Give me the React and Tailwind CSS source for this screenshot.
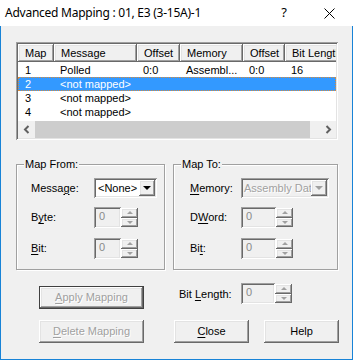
import React from "react";

const RAISED =
  "shadow-[inset_-1px_-1px_0_#696969,inset_1px_1px_0_#ffffff,inset_-2px_-2px_0_#a0a0a0,inset_2px_2px_0_#e3e3e3]";
const SUNKEN =
  "shadow-[inset_1px_1px_0_#a0a0a0,inset_-1px_-1px_0_#ffffff,inset_2px_2px_0_#696969,inset_-2px_-2px_0_#e3e3e3]";
const DIS = "text-[#a0a0a0] [text-shadow:1px_1px_0_#ffffff]";

function U({ children }) {
  return <span className="underline underline-offset-[2px] decoration-1">{children}</span>;
}

function TriUp({ color = "border-b-[#a0a0a0]" }) {
  return <div className={`w-0 h-0 border-x-[3px] border-x-transparent border-b-[3px] ${color}`} />;
}
function TriDown({ color = "border-t-[#a0a0a0]" }) {
  return <div className={`w-0 h-0 border-x-[3px] border-x-transparent border-t-[3px] ${color}`} />;
}

function Spin({ editW }) {
  return (
    <div className="flex h-[21px]">
      <div className={`${editW} h-full bg-[#f0f0f0] ${SUNKEN} pl-[5px] pt-[3px] leading-[13px] text-[#8a8a8a]`}>0</div>
      <div className="flex flex-col w-[17px] h-full pt-[1px] pb-[1px]">
        <div className={`flex-1 bg-[#f0f0f0] ${RAISED} flex items-center justify-center`}>
          <TriUp />
        </div>
        <div className={`flex-1 bg-[#f0f0f0] ${RAISED} flex items-center justify-center`}>
          <TriDown />
        </div>
      </div>
    </div>
  );
}

function Chevron({ dir }) {
  return (
    <svg width="8" height="9" viewBox="0 0 8 9">
      {dir === "left" ? (
        <path d="M5.5 1 L2 4.5 L5.5 8" fill="none" stroke="#606060" strokeWidth="2" />
      ) : (
        <path d="M2.5 1 L6 4.5 L2.5 8" fill="none" stroke="#606060" strokeWidth="2" />
      )}
    </svg>
  );
}

function HeaderCell({ w, children }) {
  return (
    <div className={`${w} shrink-0 h-full bg-[#f0f0f0] ${RAISED} pl-[7px] flex items-center whitespace-nowrap overflow-hidden`}>
      {children}
    </div>
  );
}

function Cell({ w, children }) {
  return <div className={`${w} shrink-0 pl-[6px] whitespace-nowrap overflow-hidden`}>{children}</div>;
}

function Row({ data, selected }) {
  return (
    <div
      className={`flex h-[14px] items-center leading-[12px] ${
        selected ? "bg-[#3399ff] text-white border border-dotted border-[#d88a3a]" : "border border-transparent"
      }`}
    >
      <Cell w="w-[35px]">{data[0]}</Cell>
      <Cell w="w-[83px]">{data[1]}</Cell>
      <Cell w="w-[43px]">{data[2]}</Cell>
      <Cell w="w-[63px]">{data[3]}</Cell>
      <Cell w="w-[42px]">{data[4]}</Cell>
      <Cell w="w-[50px]">{data[5]}</Cell>
    </div>
  );
}

function GroupBox({ label, w, children }) {
  return (
    <div className={`relative ${w} h-[106px] border border-[#a0a0a0] shadow-[inset_1px_1px_0_#ffffff,1px_1px_0_#ffffff]`}>
      <span className="absolute -top-[8px] left-[7px] bg-[#f0f0f0] px-[1px] leading-[14px]">{label}</span>
      {children}
    </div>
  );
}

export default function App() {
  return (
    <div className="w-[353px] h-[360px] bg-white text-[11px] text-black font-['Liberation_Sans',Arial,sans-serif] overflow-hidden">
      {/* Title bar */}
      <div className="h-[26px] flex items-center">
        <span className="pl-[5px] text-[12px] tracking-[-0.25px] font-['Noto_Sans',sans-serif] leading-[16px]">
          Advanced Mapping : 01, E3 (3-15A)-1
        </span>
        <div className="ml-auto flex items-center pr-[18px]">
          <span className="text-[13px] font-['Noto_Sans',sans-serif]">?</span>
          <svg className="ml-[37px]" width="11" height="11" viewBox="0 0 11 11">
            <path d="M0.5 0.5 L10.5 10.5 M10.5 0.5 L0.5 10.5" stroke="#000" strokeWidth="1" />
          </svg>
        </div>
      </div>

      {/* Body */}
      <div className="h-[334px] bg-[#f0f0f0] border-x border-b border-[#1883d7] pl-[15px] pt-[16px]">
        {/* List view */}
        <div className={`w-[322px] h-[98px] bg-white p-[2px] ${SUNKEN} flex flex-col`}>
          <div className="flex h-[18px] overflow-hidden">
            <HeaderCell w="w-[36px]">Map</HeaderCell>
            <HeaderCell w="w-[83px]">Message</HeaderCell>
            <HeaderCell w="w-[43px]">Offset</HeaderCell>
            <HeaderCell w="w-[63px]">Memory</HeaderCell>
            <HeaderCell w="w-[42px]">Offset</HeaderCell>
            <HeaderCell w="w-[70px]">Bit Length</HeaderCell>
          </div>
          <div className="mt-[1px] flex flex-col">
            <Row data={["1", "Polled", "0:0", "Assembl...", "0:0", "16"]} />
            <Row data={["2", "<not mapped>", "", "", "", ""]} selected />
            <Row data={["3", "<not mapped>", "", "", "", ""]} />
            <Row data={["4", "<not mapped>", "", "", "", ""]} />
          </div>
          <div className="mt-auto flex h-[17px] bg-[#f0f0f0]">
            <div className="w-[17px] flex items-center justify-center">
              <Chevron dir="left" />
            </div>
            <div className="w-[275px] bg-[#cdcdcd]" />
            <div className="flex-1" />
            <div className="w-[17px] flex items-center justify-center">
              <Chevron dir="right" />
            </div>
          </div>
        </div>

        {/* Group boxes */}
        <div className="mt-[24px] flex gap-[8px]">
          <GroupBox label="Map From:" w="w-[149px]">
            <div className="pl-[14px] pt-[13px] flex flex-col">
              <div className="flex items-center h-[20px]">
                <span className="w-[63px]">
                  Messa<U>g</U>e:
                </span>
                <div className={`w-[63px] h-[20px] bg-white ${SUNKEN} flex items-center p-[2px]`}>
                  <span className="flex-1 pl-[2px] leading-[13px]">&lt;None&gt;</span>
                  <div className={`w-[16px] h-[16px] bg-[#f0f0f0] ${RAISED} flex items-center justify-center`}>
                    <div className="w-0 h-0 border-x-[4px] border-x-transparent border-t-[4px] border-t-black" />
                  </div>
                </div>
              </div>
              <div className="flex items-center mt-[9px]">
                <span className="w-[63px]">
                  B<U>y</U>te:
                </span>
                <Spin editW="w-[27px]" />
              </div>
              <div className="flex items-center mt-[10px]">
                <span className="w-[63px]">
                  <U>B</U>it:
                </span>
                <Spin editW="w-[27px]" />
              </div>
            </div>
          </GroupBox>
          <GroupBox label="Map To:" w="w-[165px]">
            <div className="pl-[16px] pt-[13px] flex flex-col">
              <div className="flex items-center h-[20px]">
                <span className="w-[51px]">
                  <U>M</U>emory:
                </span>
                <div className={`w-[88px] h-[20px] bg-[#f0f0f0] ${SUNKEN} flex items-center p-[2px]`}>
                  <span className={`flex-1 pl-[1px] leading-[13px] whitespace-nowrap overflow-hidden ${DIS}`}>
                    Assembly Data
                  </span>
                  <div className={`w-[16px] h-[16px] shrink-0 bg-[#f0f0f0] ${RAISED} flex items-center justify-center`}>
                    <div className="w-0 h-0 border-x-[4px] border-x-transparent border-t-[4px] border-t-[#a0a0a0]" />
                  </div>
                </div>
              </div>
              <div className="flex items-center mt-[9px]">
                <span className="w-[51px]">
                  D<U>W</U>ord:
                </span>
                <Spin editW="w-[35px]" />
              </div>
              <div className="flex items-center mt-[10px]">
                <span className="w-[51px]">
                  Bi<U>t</U>:
                </span>
                <Spin editW="w-[35px]" />
              </div>
            </div>
          </GroupBox>
        </div>

        {/* Bottom buttons */}
        <div className="mt-[13px] flex items-start">
          <button
            className={`ml-[23px] mt-[3px] w-[105px] h-[23px] border border-[#404040] bg-[#f0f0f0] ${RAISED} ${DIS}`}
          >
            <U>A</U>pply Mapping
          </button>
          <span className="ml-[35px] mt-[5px] w-[62px] leading-[13px]">
            Bit <U>L</U>ength:
          </span>
          <Spin editW="w-[34px]" />
        </div>
        <div className="mt-[11px] flex items-start">
          <button className={`ml-[23px] w-[105px] h-[23px] bg-[#f0f0f0] ${RAISED} ${DIS}`}>
            <U>D</U>elete Mapping
          </button>
          <button className={`ml-[30px] w-[75px] h-[23px] bg-[#f0f0f0] ${RAISED}`}>
            <U>C</U>lose
          </button>
          <button className={`ml-[15px] w-[75px] h-[23px] bg-[#f0f0f0] ${RAISED}`}>Help</button>
        </div>
      </div>
    </div>
  );
}
